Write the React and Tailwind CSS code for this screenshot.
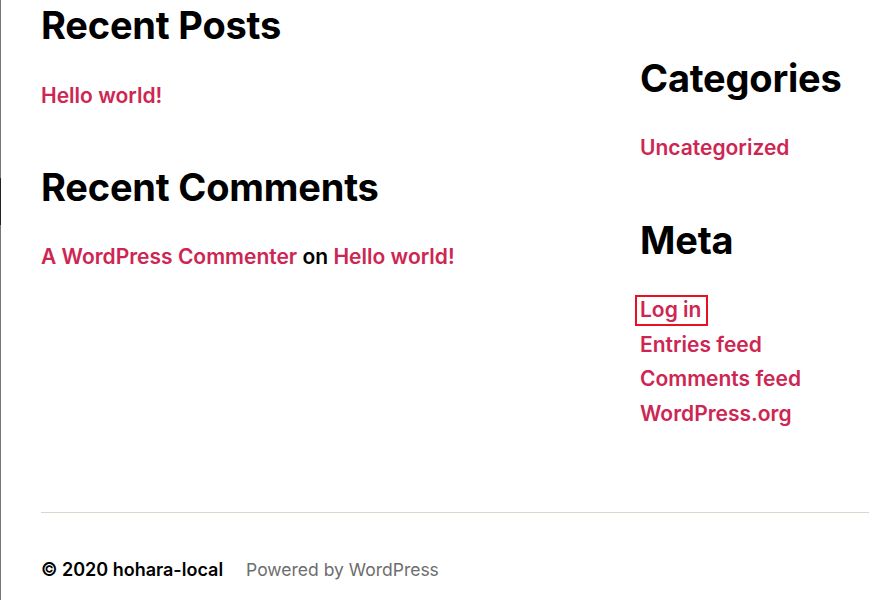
export default function App() {
  const link = "text-[#cd2653] font-semibold";
  const h = "text-[38px] leading-[46px] font-bold tracking-[-0.2px]";
  return (
    <div className="relative w-[869px] h-[600px] overflow-hidden bg-white font-['Inter','Noto_Sans',sans-serif] text-black">
      <div className="absolute left-0 top-0 h-[600px] w-px bg-[#777]" />
      <div className="absolute left-0 top-[178px] h-[47px] w-px bg-[#222]" />
      <div className="pl-[41px] pt-[2px]">
        <div className="flex">
          <div className="w-[599px]">
            <h2 className={h}>Recent Posts</h2>
            <div className="mt-[34px] text-[21px] leading-[28px]">
              <a className={link}>Hello world!</a>
            </div>
            <h2 className={`mt-[54px] ${h}`}>Recent Comments</h2>
            <div className="mt-[33px] text-[21px] leading-[28px] font-semibold">
              <a className={link}>A WordPress Commenter</a> on <a className={link}>Hello world!</a>
            </div>
          </div>
          <div className="pt-[53px]">
            <h2 className={h}>Categories</h2>
            <div className="mt-[33px] text-[21px] leading-[28px]">
              <a className={link}>Uncategorized</a>
            </div>
            <h2 className={`mt-[55px] ${h}`}>Meta</h2>
            <ul className="mt-[30px] text-[21px] leading-[34.5px]">
              <li className="relative">
                <a className={link}>Log in</a>
                <span className="absolute left-[-5px] top-[2px] w-[73px] h-[31px] border-2 border-[#e81123]" />
              </li>
              <li><a className={link}>Entries feed</a></li>
              <li><a className={link}>Comments feed</a></li>
              <li><a className={link}>WordPress.org</a></li>
            </ul>
          </div>
        </div>
        <div className="mt-[81px] h-px bg-[#dcd7ca]" />
        <div className="mt-[44px] flex items-center gap-[23px] leading-[26px]">
          <span className="font-semibold text-[18px]">© 2020 hohara-local</span>
          <span className="text-[#6d6d6d] text-[17.5px]">Powered by WordPress</span>
        </div>
      </div>
    </div>
  );
}
